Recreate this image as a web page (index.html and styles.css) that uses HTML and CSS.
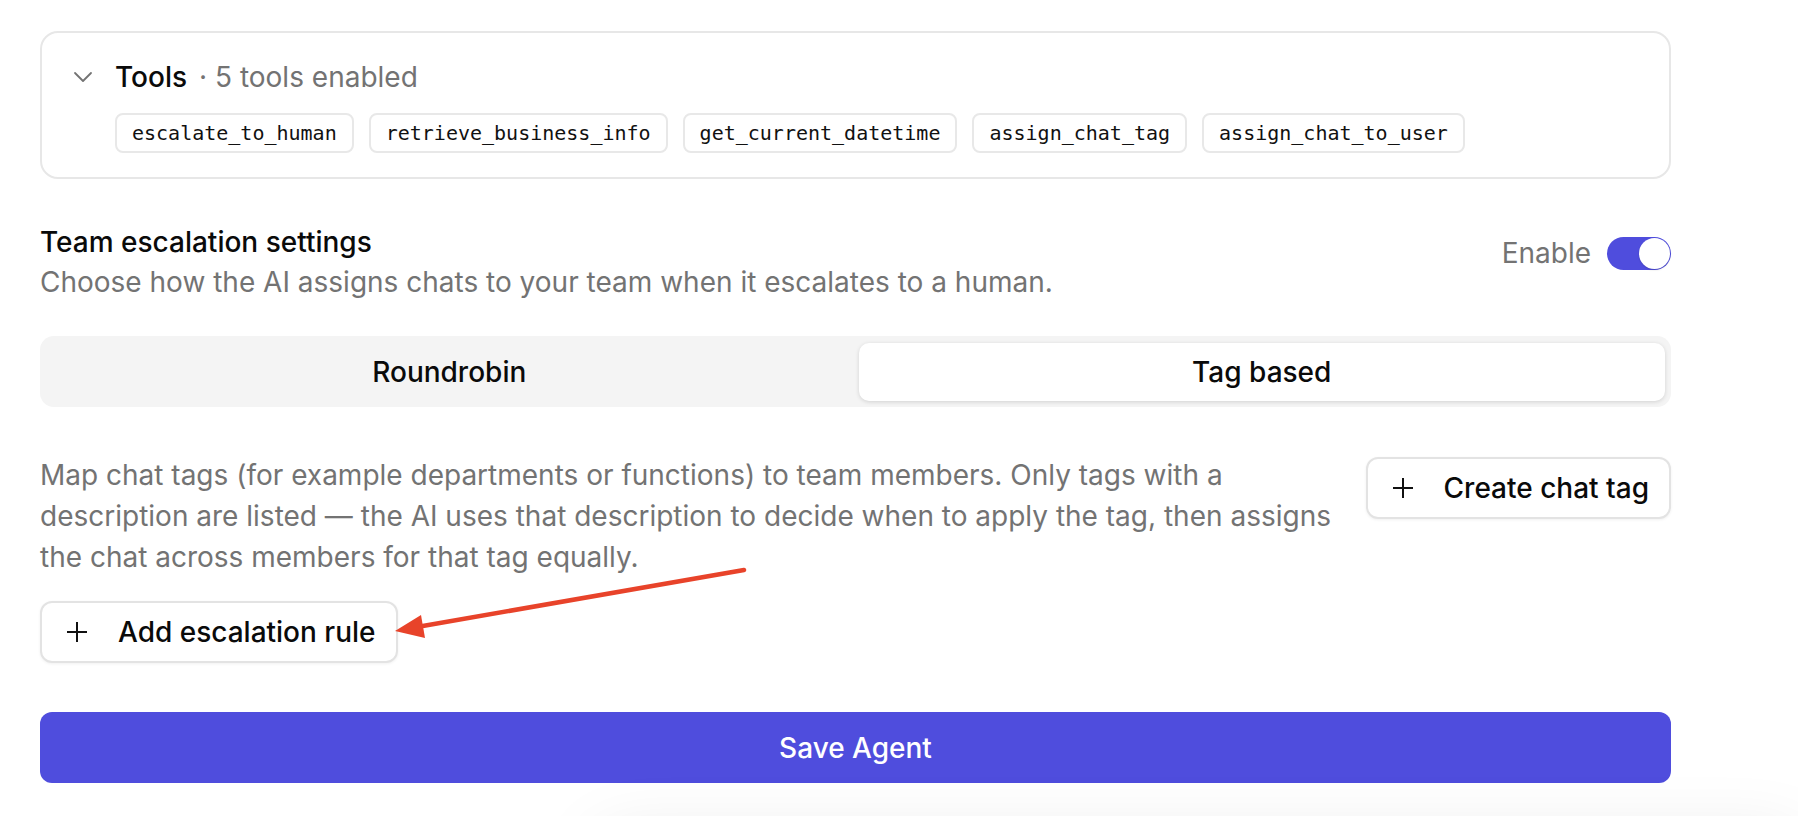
FILE: index.html
```html
<!DOCTYPE html>
<html lang="en">
<head>
  <meta charset="UTF-8">
  <title>Agent settings</title>
  <link rel="stylesheet" href="styles.css">
</head>
<body>
  <main class="page">
    <section class="tools-card">
      <div class="tools-head">
        <svg class="chevron" width="20" height="12" viewBox="0 0 20 12">
          <path d="M2 2 L10 10 L18 2" fill="none" stroke="#737373" stroke-width="1.8" stroke-linecap="round" stroke-linejoin="round"/>
        </svg>
        <span class="tools-title">Tools</span>
        <span class="tools-count">· 5 tools enabled</span>
      </div>
      <div class="chips">
        <span class="chip">escalate_to_human</span>
        <span class="chip">retrieve_business_info</span>
        <span class="chip">get_current_datetime</span>
        <span class="chip">assign_chat_tag</span>
        <span class="chip">assign_chat_to_user</span>
      </div>
    </section>

    <section class="escalation">
      <div class="escalation-head">
        <div>
          <h2>Team escalation settings</h2>
          <p class="muted">Choose how the AI assigns chats to your team when it escalates to a human.</p>
        </div>
        <label class="enable">
          <span>Enable</span>
          <span class="switch"><span class="knob"></span></span>
        </label>
      </div>

      <div class="segmented">
        <button class="seg">Roundrobin</button>
        <button class="seg active">Tag based</button>
      </div>

      <div class="tag-row">
        <p class="muted desc">Map chat tags (for example departments or functions) to team members. Only tags with a description are listed — the AI uses that description to decide when to apply the tag, then assigns the chat across members for that tag equally.</p>
        <button class="btn-outline">
          <svg width="22" height="22" viewBox="0 0 22 22"><path d="M11 1 V21 M1 11 H21" stroke="#111" stroke-width="2"/></svg>
          Create chat tag
        </button>
      </div>

      <div class="rule-row">
        <button class="btn-outline">
          <svg width="22" height="22" viewBox="0 0 22 22"><path d="M11 1 V21 M1 11 H21" stroke="#111" stroke-width="2"/></svg>
          Add escalation rule
        </button>
        <!-- annotation arrow -->
        <svg class="arrow" width="360" height="80" viewBox="0 0 360 80">
          <line x1="349" y1="6" x2="22" y2="63" stroke="#e8432a" stroke-width="4.5" stroke-linecap="round"/>
          <polygon points="0,67 26,51 30,74" fill="#e8432a"/>
        </svg>
      </div>
    </section>

    <button class="save">Save Agent</button>
  </main>
  <div class="below-panel"></div>
</body>
</html>
```

FILE: styles.css
```css
body {
  font-family: Inter, 'Noto Sans', sans-serif;
  background-color: #ffffff;
  color: #0a0a0a;
  margin: 0;
  padding: 0;
  overflow: hidden;
}

.page {
  width: 1631px;
  padding: 31px 0 0 40px;
}

.tools-card {
  border: 2px solid #e7e7e7;
  border-radius: 18px;
  padding: 27px 30px 24px 31px;
}

.tools-head {
  display: flex;
  align-items: center;
  height: 34px;
}

.chevron {
  margin-right: 22px;
}

.tools-title {
  font-size: 28px;
  font-weight: 500;
  margin-right: 12px;
}

.tools-count {
  font-size: 28px;
  color: #737373;
}

.chips {
  display: flex;
  gap: 15px;
  margin-top: 19px;
  padding-left: 42px;
}

.chip {
  font-family: 'DejaVu Sans Mono', monospace;
  font-size: 20px;
  border: 2px solid #e8e8e8;
  border-radius: 8px;
  padding: 0 15px;
  height: 36px;
  line-height: 36px;
  color: #111;
}

.escalation {
  margin-top: 44px;
}

.escalation-head {
  display: flex;
  justify-content: space-between;
  align-items: flex-start;
}

.escalation-head h2 {
  margin: 0;
  font-size: 28px;
  font-weight: 500;
  line-height: 38px;
}

.muted {
  color: #737373;
  font-size: 28px;
  line-height: 41px;
  margin: 1px 0 0;
}

.enable {
  display: flex;
  align-items: center;
  gap: 16px;
  margin-top: 13px;
  font-size: 28px;
  color: #737373;
}

.switch {
  width: 64px;
  height: 33px;
  border-radius: 17px;
  background-color: #4f4ddd;
  display: flex;
  justify-content: flex-end;
  align-items: center;
  padding: 0 1px;
  box-sizing: border-box;
}

.knob {
  width: 31px;
  height: 31px;
  border-radius: 50%;
  background-color: #fff;
  box-shadow: 0 1px 2px rgba(0,0,0,0.15);
}

.segmented {
  margin-top: 33px;
  background-color: #f4f4f4;
  border-radius: 14px;
  padding: 7px 6px 6px;
  display: grid;
  grid-template-columns: 1fr 1fr;
  gap: 6px;
}

.seg {
  font-family: inherit;
  font-size: 28px;
  font-weight: 500;
  color: #0a0a0a;
  background: none;
  border: none;
  border-radius: 10px;
  height: 58px;
}

.seg.active {
  background-color: #fff;
  box-shadow: 0 1px 4px rgba(0,0,0,0.14);
}

.tag-row {
  margin-top: 48px;
  display: flex;
  justify-content: space-between;
  align-items: flex-start;
}

.desc {
  width: 1335px;
  margin: 0;
}

.tag-row .btn-outline {
  margin-top: 2px;
}

.btn-outline {
  font-family: inherit;
  font-size: 28px;
  font-weight: 500;
  color: #0a0a0a;
  background-color: #fff;
  border: 2px solid #e3e3e3;
  border-radius: 12px;
  height: 62px;
  padding: 0 20px 0 24px;
  display: flex;
  align-items: center;
  gap: 30px;
  box-shadow: 0 1px 3px rgba(0,0,0,0.06);
  white-space: nowrap;
}

.rule-row {
  position: relative;
  margin-top: 23px;
}

.arrow {
  position: absolute;
  left: 355px;
  top: -37px;
}

.save {
  display: block;
  width: 100%;
  margin-top: 49px;
  height: 71px;
  border: none;
  border-radius: 12px;
  background-color: #4f4ddd;
  color: #fff;
  font-family: inherit;
  font-size: 28px;
  font-weight: 500;
}

.below-panel {
  margin: 55px 0 0 600px;
  height: 200px;
  box-shadow: 0 0 70px rgba(0,0,0,0.1);
}
```
